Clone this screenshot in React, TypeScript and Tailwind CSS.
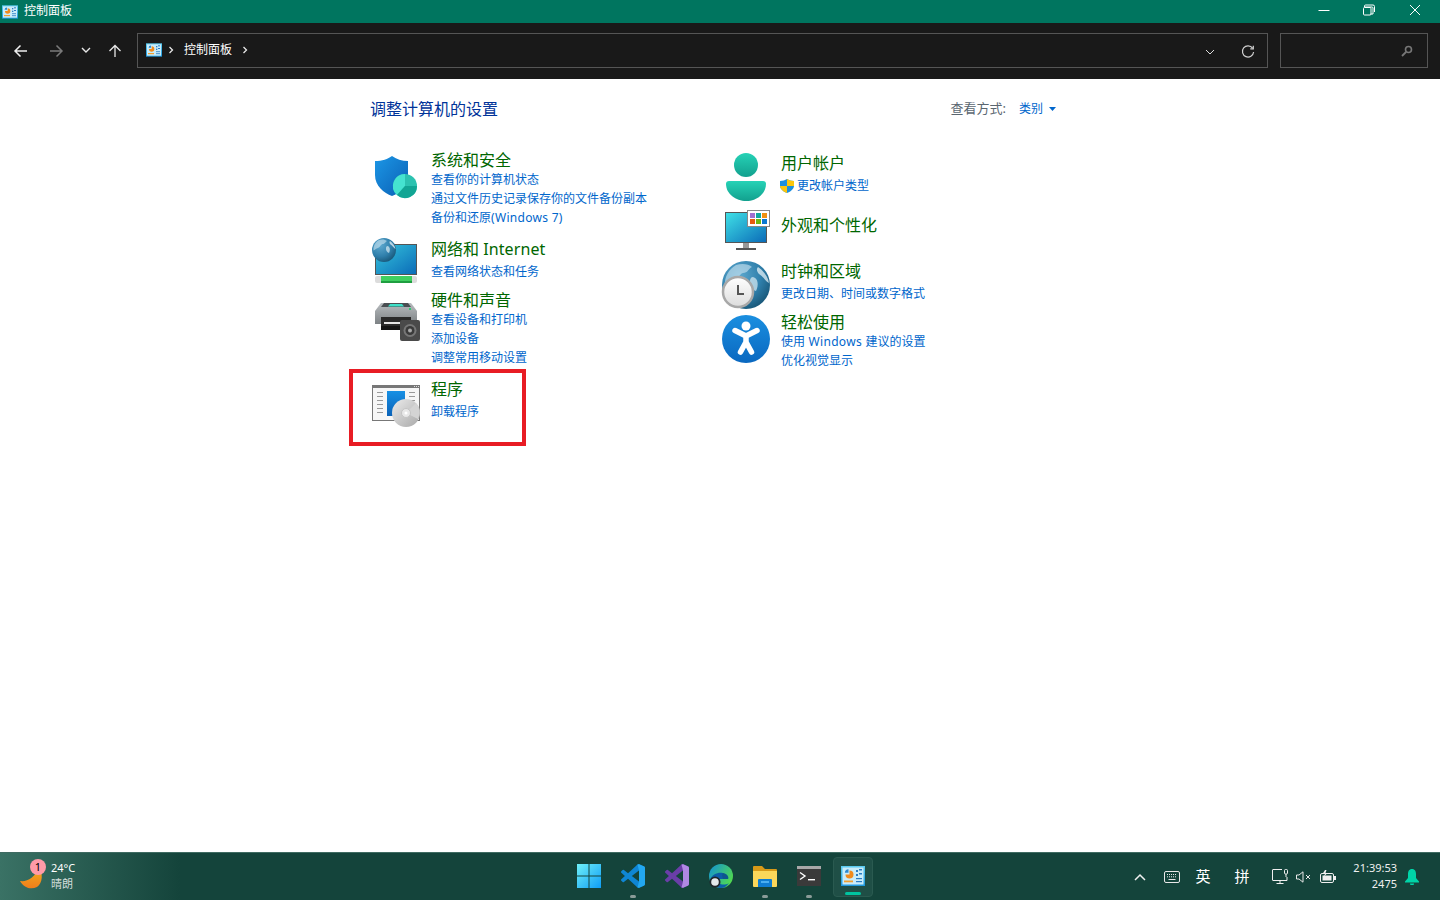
import React from "react";

function CpIcon({ size }: { size: number }) {
  return (
    <svg width={size} height={size} viewBox="0 0 24 24" className="block">
      <defs>
        <linearGradient id={`cpf${size}`} x1="0" y1="0" x2="0" y2="1">
          <stop offset="0" stopColor="#5ccdf2" />
          <stop offset="1" stopColor="#1f98dd" />
        </linearGradient>
      </defs>
      <rect x="0" y="2" width="24" height="20" fill={`url(#cpf${size})`} />
      <rect x="1.5" y="3.5" width="21" height="17" fill="#c9ecfa" />
      <path d="M8.5 6.5a4 4 0 1 1-4 4h4z" fill="#f08a1c" />
      <path d="M7.5 5.2a3.6 3.6 0 0 0-3.6 3.6h3.6z" fill="#2a88d0" />
      <rect x="3" y="16.5" width="9" height="1.8" fill="#f0a030" />
      <rect x="15" y="6" width="2" height="2" fill="#2a7cc4" />
      <rect x="18" y="5" width="3" height="1.5" fill="#2a7cc4" />
      <rect x="15" y="10" width="2" height="2" fill="#2a7cc4" />
      <rect x="18" y="9" width="3" height="1.5" fill="#2a7cc4" />
      <rect x="15" y="14" width="6" height="1.2" fill="#2a7cc4" />
      <rect x="15" y="17" width="6" height="1.2" fill="#2a7cc4" />
    </svg>
  );
}

function ShieldIcon() {
  return (
    <svg width="48" height="48" viewBox="0 0 48 48" className="block overflow-visible">
      <defs>
        <linearGradient id="sh" x1="0" y1="0" x2="1" y2="1">
          <stop offset="0" stopColor="#1c97e6" />
          <stop offset="1" stopColor="#0a5fb4" />
        </linearGradient>
      </defs>
      <path d="M20 3C24 6 30 8 36 8V22C36 33 28 40 20 43C12 40 3 33 3 22V8C10 8 16 6 20 3Z" fill="url(#sh)" />
      <circle cx="33" cy="33" r="12" fill="#2cc2b0" />
      <path d="M33 33L33 21A12 12 0 0 0 25 42Z" fill="#45e3d0" />
      <path d="M33 33L25 42A12 12 0 0 0 45 33Z" fill="#12a594" />
    </svg>
  );
}

function GlobeShape({ id, cx, cy, r }: { id: string; cx: number; cy: number; r: number }) {
  const k = r / 24;
  return (
    <g transform={`translate(${cx - r} ${cy - r}) scale(${k})`}>
      <defs>
        <radialGradient id={id} cx="0.35" cy="0.3" r="0.85">
          <stop offset="0" stopColor="#5ea9cf" />
          <stop offset="0.55" stopColor="#2f7fab" />
          <stop offset="1" stopColor="#114a68" />
        </radialGradient>
      </defs>
      <circle cx="24" cy="24" r="24" fill={`url(#${id})`} />
      <path d="M14 4C20 2 27 3 30 6C26 8 26 12 21 12C17 13 17 18 12 20C8 21 6 24 3 25C2 16 7 8 14 4Z" fill="#cfe6f1" fillOpacity="0.6" />
      <path d="M36 6C42 10 46 16 47 22C43 20 41 15 37 13C35 11 34 8 36 6Z" fill="#e6f2f7" fillOpacity="0.75" />
      <path d="M31 16C36 17 37 24 34 30C30 29 27 24 28 20C28 18 29 16 31 16Z" fill="#dcecf4" fillOpacity="0.7" />
    </g>
  );
}

function NetworkIcon() {
  return (
    <svg width="48" height="48" viewBox="0 0 48 48" className="block overflow-visible">
      <defs>
        <linearGradient id="nm" x1="0" y1="0" x2="1" y2="1">
          <stop offset="0" stopColor="#35c4dc" />
          <stop offset="1" stopColor="#0b6cb8" />
        </linearGradient>
      </defs>
      <rect x="3" y="6" width="42" height="31" fill="#555" />
      <rect x="4" y="7" width="40" height="29" fill="url(#nm)" />
      <rect x="3" y="38" width="42" height="7" rx="2" fill="#dcdcdc" />
      <rect x="9" y="38" width="31" height="7" fill="#3fcf60" />
      <rect x="9" y="43" width="31" height="2" fill="#1f9e40" />
      <GlobeShape id="ng" cx={12} cy={12} r={12} />
    </svg>
  );
}

function PrinterIcon() {
  return (
    <svg width="48" height="48" viewBox="0 0 48 48" className="block overflow-visible">
      <defs>
        <linearGradient id="pb" x1="0" y1="0" x2="0" y2="1">
          <stop offset="0" stopColor="#b8bcbf" />
          <stop offset="1" stopColor="#7d8285" />
        </linearGradient>
      </defs>
      <path d="M9 5H39L45 13V26H3V13Z" fill="url(#pb)" />
      <path d="M12 5H36L39 9H9Z" fill="#4a4e52" />
      <path d="M18 6H30L32 8.5H16Z" fill="#3fe0c8" />
      <rect x="37" y="10" width="2" height="2" fill="#2ecc71" />
      <rect x="9" y="19" width="30" height="9" fill="#2a2a2a" />
      <rect x="12" y="24" width="24" height="2" fill="#e4e4e4" />
      <rect x="9" y="28" width="24" height="4" fill="#151515" />
      <rect x="28" y="22" width="20" height="21" rx="2" fill="#4a4a4a" />
      <circle cx="38" cy="32.5" r="6.5" fill="#777" />
      <circle cx="38" cy="32.5" r="4.5" fill="#3a3a3a" />
      <circle cx="38" cy="32.5" r="2" fill="#aaa" />
    </svg>
  );
}

function ProgramsIcon() {
  return (
    <svg width="48" height="48" viewBox="0 0 48 48" className="block overflow-visible">
      <defs>
        <linearGradient id="pd" x1="0" y1="0" x2="1" y2="1">
          <stop offset="0" stopColor="#ececec" />
          <stop offset="1" stopColor="#a8a8a8" />
        </linearGradient>
        <linearGradient id="pbl" x1="0" y1="0" x2="0" y2="1">
          <stop offset="0" stopColor="#1790e4" />
          <stop offset="1" stopColor="#0a62b8" />
        </linearGradient>
      </defs>
      <rect x="0" y="3" width="48" height="36" fill="#777" />
      <rect x="1" y="6" width="46" height="32" fill="#f6f6f6" />
      <rect x="42" y="4" width="1" height="1" fill="#ddd" />
      <rect x="44" y="4" width="1" height="1" fill="#ddd" />
      <rect x="46" y="4" width="1" height="1" fill="#ddd" />
      {[10, 14, 18, 22, 26, 30].map((y) => (
        <rect key={y} x="5" y={y} width="6" height="1" fill="#999" />
      ))}
      {[10, 14, 18].map((y) => (
        <rect key={y} x="37" y={y} width="6" height="1" fill="#999" />
      ))}
      <rect x="15" y="9" width="18" height="25" fill="url(#pbl)" />
      <circle cx="34" cy="31" r="14" fill="url(#pd)" />
      <path d="M34 31L44 21A14 14 0 0 1 46 37Z" fill="#d4d4d4" />
      <circle cx="34" cy="31" r="4.5" fill="#e8e8e8" stroke="#c4c4c4" />
      <circle cx="34" cy="31" r="1.5" fill="#fff" />
    </svg>
  );
}

function UserIcon() {
  return (
    <svg width="48" height="48" viewBox="0 0 48 48" className="block overflow-visible">
      <defs>
        <linearGradient id="u1" x1="0" y1="0" x2="0" y2="1">
          <stop offset="0" stopColor="#26d2b6" />
          <stop offset="1" stopColor="#12a08e" />
        </linearGradient>
      </defs>
      <circle cx="24" cy="12" r="12" fill="url(#u1)" />
      <path d="M7 28H41C43 28 44 29 44 31C44 41 34 48 24 48C14 48 4 41 4 31C4 29 5 28 7 28Z" fill="url(#u1)" />
    </svg>
  );
}

function AppearanceIcon() {
  const cells = ["#a070d0", "#10a8a0", "#f09010", "#e85a10", "#70b810", "#0a78d0"];
  return (
    <svg width="48" height="48" viewBox="0 0 48 48" className="block overflow-visible">
      <defs>
        <linearGradient id="am" x1="0" y1="0" x2="1" y2="1">
          <stop offset="0" stopColor="#3fe0e6" />
          <stop offset="1" stopColor="#0b6cb8" />
        </linearGradient>
      </defs>
      <rect x="3" y="6" width="42" height="31" fill="#555" />
      <rect x="4" y="7" width="40" height="29" fill="url(#am)" />
      <rect x="21" y="37" width="6" height="5" fill="#999" />
      <rect x="14" y="42" width="20" height="2" fill="#555" />
      <rect x="25.5" y="4.5" width="22" height="16" fill="#fff" stroke="#888" />
      {cells.map((c, i) => (
        <rect key={c} x={28 + (i % 3) * 6} y={7 + Math.floor(i / 3) * 6} width="5" height="5" fill={c} />
      ))}
    </svg>
  );
}

function ClockIcon() {
  return (
    <svg width="48" height="48" viewBox="0 0 48 48" className="block overflow-visible">
      <defs>
        <linearGradient id="cf" x1="0" y1="0" x2="0" y2="1">
          <stop offset="0" stopColor="#fff" />
          <stop offset="1" stopColor="#dcdcdc" />
        </linearGradient>
      </defs>
      <GlobeShape id="cg" cx={24} cy={24} r={24} />
      <circle cx="16" cy="31" r="15" fill="url(#cf)" stroke="#a8a8a8" strokeWidth="2.5" />
      <path d="M16 24V33H22" fill="none" stroke="#555" strokeWidth="2" />
    </svg>
  );
}

function EaseIcon() {
  return (
    <svg width="48" height="48" viewBox="0 0 48 48" className="block overflow-visible">
      <defs>
        <linearGradient id="ea" x1="0" y1="0" x2="0" y2="1">
          <stop offset="0" stopColor="#1a8fe0" />
          <stop offset="1" stopColor="#0a68c0" />
        </linearGradient>
      </defs>
      <circle cx="24" cy="24" r="24" fill="url(#ea)" />
      <circle cx="24" cy="11" r="4.5" fill="#fff" />
      <path d="M13 15.5L24 21L35 15.5M24 21V27M24 27L18.5 37M24 27L29.5 37" fill="none" stroke="#fff" strokeWidth="5.5" strokeLinecap="round" strokeLinejoin="round" />
    </svg>
  );
}

function UacShield() {
  return (
    <svg width="14" height="14" viewBox="0 0 14 14" className="block shrink-0">
      <path d="M7 0C9 1 11 2 14 2V7C14 10 10 13 7 14C4 13 0 10 0 7V2C3 2 5 1 7 0Z" fill="#1a8fe0" />
      <path d="M7 0C9 1 11 2 14 2V7H7Z" fill="#fbc60e" />
      <path d="M7 7H0C0 10 4 13 7 14Z" fill="#fbc60e" />
    </svg>
  );
}

type ItemProps = {
  title: React.ReactNode;
  links: React.ReactNode[];
  icon: React.ReactNode;
  iconClass: string;
  className: string;
  titleGap?: string;
  children?: React.ReactNode;
};

function Item({ title, links, icon, iconClass, className, titleGap = "", children }: ItemProps) {
  return (
    <div className={`relative flex gap-[11px] ${className}`}>
      <div className="w-12 h-0 shrink-0">
        <div className={iconClass}>{icon}</div>
      </div>
      <div className="flex flex-col">
        <div className="text-[16px] leading-[20px] text-[#006600]">{title}</div>
        <div className={`flex flex-col ${titleGap}`}>
          {links.map((l, i) => (
            <div key={i} className="text-[12px] leading-[19px] text-[#0066cc] whitespace-pre flex items-center">
              {l}
            </div>
          ))}
        </div>
      </div>
      {children}
    </div>
  );
}

function Chevron({ className = "" }: { className?: string }) {
  return (
    <svg width="8" height="8" viewBox="0 0 8 8" className={className}>
      <path d="M2.5 1L5.5 4L2.5 7" fill="none" stroke="#e8e8e8" strokeWidth="1.3" />
    </svg>
  );
}

function VsShape({ fill }: { fill: string }) {
  return (
    <path
      d="M23.15 2.587L18.21.21a1.494 1.494 0 0 0-1.705.29l-9.46 8.63-4.12-3.128a.999.999 0 0 0-1.276.057L.327 7.261A1 1 0 0 0 .326 8.74L3.899 12 .326 15.26a1 1 0 0 0 .001 1.479L1.65 17.94a.999.999 0 0 0 1.276.057l4.12-3.128 9.46 8.63a1.492 1.492 0 0 0 1.704.29l4.942-2.377A1.5 1.5 0 0 0 24 20.06V3.939a1.5 1.5 0 0 0-.85-1.352zm-5.146 14.861L10.826 12l7.178-5.448v10.896z"
      fill={fill}
    />
  );
}

function TaskButton({ children, dot = false }: { children: React.ReactNode; dot?: boolean }) {
  return (
    <div className="w-11 h-10 flex flex-col items-center relative pt-[7px]">
      {children}
      {dot && <div className="absolute bottom-[-1px] w-[6px] h-[3px] rounded-full bg-[#8a9c98]" />}
    </div>
  );
}

export default function App() {
  return (
    <div className="h-[900px] w-[1440px] overflow-hidden flex flex-col bg-white font-['Noto_Sans','Noto_Sans_CJK_SC',sans-serif]">
      {/* title bar */}
      <div className="h-[23px] bg-[#00755f] flex items-center text-white shrink-0">
        <div className="pl-[2px]">
          <CpIcon size={16} />
        </div>
        <span className="ml-[6px] mt-[-2px] text-[12px] leading-none">控制面板</span>
        <div className="ml-auto flex items-center">
          <svg width="46" height="23" viewBox="0 0 46 23">
            <path d="M18.5 10.5H29.5" stroke="#fff" />
          </svg>
          <svg width="46" height="23" viewBox="0 0 46 23">
            <g transform="translate(-1 0)">
              <path d="M19.5 7.5H27a1 1 0 0 1 1 1V14.5H25.5M19.5 7.5V6.5a1 1 0 0 1 1-1H28a1.5 1.5 0 0 1 1.5 1.5V12.5" fill="none" stroke="#fff" transform="translate(0 -0.5)" />
              <rect x="18.5" y="7.5" width="7.5" height="7.5" rx="1" fill="none" stroke="#fff" />
            </g>
          </svg>
          <svg width="46" height="23" viewBox="0 0 46 23" className="mr-[2px]">
            <path d="M18 5L28 15M28 5L18 15" stroke="#fff" fill="none" />
          </svg>
        </div>
      </div>

      {/* toolbar */}
      <div className="h-[56px] bg-[#191919] flex items-center shrink-0 pl-[12px] pr-[12px]">
        <div className="flex items-center w-[125px]">
          <svg width="18" height="18" viewBox="0 0 18 18" className="mr-[17px]">
            <path d="M15 9H3.5M8.5 3.5L3 9L8.5 14.5" fill="none" stroke="#f0f0f0" strokeWidth="1.5" />
          </svg>
          <svg width="18" height="18" viewBox="0 0 18 18" className="mr-[15px]">
            <path d="M3 9H14.5M9.5 3.5L15 9L9.5 14.5" fill="none" stroke="#7a7a7a" strokeWidth="1.5" />
          </svg>
          <svg width="12" height="12" viewBox="0 0 12 12" className="mr-[15px] mt-[-2px]">
            <path d="M2 4L6 8L10 4" fill="none" stroke="#e8e8e8" strokeWidth="1.4" />
          </svg>
          <svg width="16" height="16" viewBox="0 0 16 16">
            <path d="M8 14V2.5M2.5 8L8 2.5L13.5 8" fill="none" stroke="#e8e8e8" strokeWidth="1.3" />
          </svg>
        </div>
        <div className="w-[1131px] h-[35px] mt-[-1px] border border-[#555] flex items-center pl-[8px] pb-[1px] text-[12px] text-white">
          <CpIcon size={16} />
          <Chevron className="ml-[5px]" />
          <span className="ml-[9px]">控制面板</span>
          <Chevron className="ml-[9px]" />
          <div className="ml-auto flex items-center pr-[12px]">
            <svg width="10" height="10" viewBox="0 0 10 10" className="mr-[26px] mt-[4px]">
              <path d="M1 3L5 7L9 3" fill="none" stroke="#ddd" />
            </svg>
            <svg width="14" height="14" viewBox="0 0 14 14" className="mt-[3px]">
              <path d="M11.6 3.2A5.6 5.6 0 1 0 12.6 7" fill="none" stroke="#d0d0d0" strokeWidth="1.2" />
              <path d="M12.3 0.8V3.8H9.3" fill="none" stroke="#d0d0d0" strokeWidth="1.2" />
            </svg>
          </div>
        </div>
        <div className="ml-[12px] w-[148px] h-[35px] mt-[-1px] border border-[#555] flex items-center justify-end pr-[14px]">
          <svg width="12" height="12" viewBox="0 0 12 12">
            <circle cx="7.5" cy="4.5" r="3" fill="none" stroke="#777" strokeWidth="1.6" />
            <path d="M5 7L1 11" stroke="#777" strokeWidth="1.8" />
          </svg>
        </div>
      </div>

      {/* content */}
      <div className="flex-1 bg-white pl-[370px] pt-[20px]">
        <div className="w-[686px] flex items-center justify-between h-[20px]">
          <h1 className="text-[16px] leading-[20px] font-normal text-[#003399]">调整计算机的设置</h1>
          <div className="flex items-center">
            <span className="text-[13px] text-[#5a6670]">查看方式:</span>
            <span className="ml-[13px] text-[12px] text-[#0066cc]">类别</span>
            <svg width="7" height="4" viewBox="0 0 7 4" className="ml-[6px]">
              <path d="M0 0H7L3.5 4Z" fill="#0066cc" />
            </svg>
          </div>
        </div>
        <div className="flex mt-[31px]">
          <div className="w-[350px] pl-[2px] flex flex-col">
            <Item
              title="系统和安全"
              icon={<ShieldIcon />}
              iconClass="mt-[3px]"
              className=""
              links={[
                "查看你的计算机状态",
                "通过文件历史记录保存你的文件备份副本",
                <span key="b">
                  备份和还原<span className="tracking-[0.3px]">(Windows 7)</span>
                </span>,
              ]}
            />
            <Item
              title={
                <span>
                  网络和 <span className="tracking-[0.1px]">Internet</span>
                </span>
              }
              icon={<NetworkIcon />}
              iconClass="mt-[-1px]"
              className="mt-[12px]"
              titleGap="mt-[3px]"
              links={["查看网络状态和任务"]}
            />
            <Item
              title="硬件和声音"
              icon={<PrinterIcon />}
              iconClass="mt-[8px]"
              className="mt-[9px]"
              links={["查看设备和打印机", "添加设备", "调整常用移动设置"]}
            />
            <Item
              title="程序"
              icon={<ProgramsIcon />}
              iconClass="mt-[3px]"
              className="mt-[12px]"
              titleGap="mt-[3px]"
              links={["卸载程序"]}
            >
              <div className="absolute left-[-23px] top-[-10px] w-[177px] h-[77px] border-[4px] border-[#e81c24]" />
            </Item>
          </div>
          <div className="pl-[2px] flex flex-col mt-[3px]">
            <Item
              title="用户帐户"
              icon={<UserIcon />}
              iconClass=""
              className=""
              titleGap="mt-[3px]"
              links={[
                <span key="a" className="flex items-center gap-[3px] ml-[-1px]">
                  <UacShield />
                  更改帐户类型
                </span>,
              ]}
            />
            <Item
              title="外观和个性化"
              icon={<AppearanceIcon />}
              iconClass="mt-[-9px]"
              className="mt-[20px]"
              links={[]}
            />
            <Item
              title="时钟和区域"
              icon={<ClockIcon />}
              iconClass=""
              className="mt-[26px]"
              titleGap="mt-[3px]"
              links={["更改日期、时间或数字格式"]}
            />
            <Item
              title="轻松使用"
              icon={<EaseIcon />}
              iconClass="mt-[3px]"
              className="mt-[9px]"
              links={[
                <span key="c">
                  使用<span className="tracking-[0.33px]"> Windows </span>建议的设置
                </span>,
                "优化视觉显示",
              ]}
            />
          </div>
        </div>
      </div>

      {/* taskbar */}
      <div className="h-[48px] shrink-0 bg-[#14443b] border-t border-[#3f6b62] grid grid-cols-[1fr_auto_1fr] items-center text-white">
        <div className="h-full bg-gradient-to-r from-[#3a7265] to-[#14443b] w-[180px] flex items-center pl-[19px]">
          <div className="relative w-[24px] h-[32px] mr-[8px]">
            <svg width="24" height="32" viewBox="0 0 24 32">
              <defs>
                <linearGradient id="mo" x1="0" y1="0" x2="0" y2="1">
                  <stop offset="0" stopColor="#f0b020" />
                  <stop offset="1" stopColor="#f07d1a" />
                </linearGradient>
              </defs>
              <path d="M1 20C8 21 16 17 20 6C24 12 24 22 18 26C12 29 5 27 1 20Z" fill="url(#mo)" />
            </svg>
            <div className="absolute left-[11px] top-[-2px] w-[16px] h-[16px] rounded-full bg-[#ff9ba8] text-[11px] leading-[16px] text-center text-black">
              1
            </div>
          </div>
          <div className="flex flex-col mt-[-2px]">
            <span className="text-[11px] leading-[16px] text-white">24°C</span>
            <span className="text-[11px] leading-[16px] text-[#d4dedb]">晴朗</span>
          </div>
        </div>

        <div className="flex items-start h-full pt-[4px] pl-[2px]">
          <TaskButton>
            <svg width="24" height="24" viewBox="0 0 24 24">
              <defs>
                <linearGradient id="st" x1="0" y1="0" x2="1" y2="1">
                  <stop offset="0" stopColor="#6ff0f8" />
                  <stop offset="1" stopColor="#0f9df5" />
                </linearGradient>
              </defs>
              <path d="M0 0H11.5V11.5H0ZM12.5 0H24V11.5H12.5ZM0 12.5H11.5V24H0ZM12.5 12.5H24V24H12.5Z" fill="url(#st)" />
            </svg>
          </TaskButton>
          <TaskButton dot>
            <svg width="24" height="24" viewBox="0 0 24 24">
              <VsShape fill="#0f86d4" />
              <path d="M16.5.5L18.2.2L23.2 2.6A1.5 1.5 0 0 1 24 3.9V20.1A1.5 1.5 0 0 1 23.2 21.4L18.2 23.8L16.5 23.5L18 17.4V6.6Z" fill="#23a8f0" />
            </svg>
          </TaskButton>
          <TaskButton>
            <svg width="24" height="24" viewBox="0 0 24 24">
              <VsShape fill="#6a3ea8" />
              <path d="M16.5.5L18.2.2L23.2 2.6A1.5 1.5 0 0 1 24 3.9V20.1A1.5 1.5 0 0 1 23.2 21.4L18.2 23.8L16.5 23.5L18 17.4V6.6Z" fill="#b088e4" />
            </svg>
          </TaskButton>
          <TaskButton>
            <svg width="24" height="24" viewBox="0 0 24 24">
              <defs>
                <linearGradient id="ed" x1="0" y1="0" x2="1" y2="0.6">
                  <stop offset="0" stopColor="#1090d8" />
                  <stop offset="1" stopColor="#50d850" />
                </linearGradient>
              </defs>
              <circle cx="12" cy="12" r="12" fill="url(#ed)" />
              <path d="M1 16C3 10 9 8 14 9C19 10 20 14 19 15H11C9 15 8 17 10 19C12 21 17 21 20 19C18 22 15 24 12 24C6 24 2 20 1 16Z" fill="#0c5ca8" />
              <path d="M14 9C19 10 20 14 19 15H14C13 12 13 10 14 9Z" fill="#14443b" fillOpacity="0.25" />
              <circle cx="6" cy="18" r="5.5" fill="#20252a" />
              <circle cx="6" cy="18" r="3.8" fill="#e4e8ea" />
            </svg>
          </TaskButton>
          <TaskButton dot>
            <svg width="24" height="24" viewBox="0 0 24 24">
              <path d="M0 3a1 1 0 0 1 1-1H9L12 5H23a1 1 0 0 1 1 1V8H0Z" fill="#d89a18" />
              <path d="M0 7H24V22a1 1 0 0 1-1 1H1a1 1 0 0 1-1-1Z" fill="#fbd75a" />
              <path d="M5 16a1 1 0 0 1 1-1H18a1 1 0 0 1 1 1V23H5Z" fill="#0f7cd0" />
              <rect x="8" y="17" width="8" height="2" fill="#4aaef0" />
            </svg>
          </TaskButton>
          <TaskButton dot>
            <svg width="24" height="24" viewBox="0 0 24 24">
              <rect x="0" y="2" width="24" height="20" fill="#3a3a3a" />
              <rect x="0" y="2" width="24" height="3" fill="#a8a8a8" />
              <path d="M3 8.5L8 12L3 15.5" fill="none" stroke="#fff" strokeWidth="1.4" />
              <rect x="11" y="15" width="7" height="1.4" fill="#fff" />
            </svg>
          </TaskButton>
          <div className="w-[40px] h-[40px] mx-[2px] rounded-[4px] bg-[#1f4f46] border border-[#2a5a50] flex flex-col items-center relative pt-[6px]">
            <CpIcon size={24} />
            <div className="absolute bottom-[1px] w-[16px] h-[3px] rounded-full bg-[#00c4a0]" />
          </div>
        </div>

        <div className="flex items-center justify-end h-full pr-[13px]">
          <div className="w-[24px] flex justify-center">
            <svg width="12" height="8" viewBox="0 0 12 8">
              <path d="M1 7L6 2L11 7" fill="none" stroke="#f0f0f0" strokeWidth="1.5" />
            </svg>
          </div>
          <div className="w-[38px] pl-[2px] flex justify-center">
            <svg width="16" height="12" viewBox="0 0 16 12">
              <rect x="0.5" y="0.5" width="15" height="11" rx="1.5" fill="none" stroke="#e8e8e8" />
              <path d="M3 3.5H13M3 5.8H13" stroke="#e8e8e8" strokeDasharray="1 1" />
              <path d="M4.5 8.5H11.5" stroke="#e8e8e8" />
            </svg>
          </div>
          <div className="w-[26px] text-center text-[15px] leading-none">英</div>
          <div className="w-[52px] text-center text-[15px] leading-none">拼</div>
          <div className="w-[24px] flex justify-center">
            <svg width="16" height="17" viewBox="0 0 16 17">
              <path d="M10 1.5H1a.5.5 0 0 0-.5.5V12a.5.5 0 0 0 .5.5H15V9" fill="none" stroke="#f0f0f0" />
              <path d="M8 12.5V15.5M4.5 15.5H11.5" stroke="#f0f0f0" />
              <rect x="12.5" y="1.5" width="3" height="4.5" rx="1" fill="none" stroke="#f0f0f0" />
              <path d="M14 6V9" stroke="#f0f0f0" />
            </svg>
          </div>
          <div className="w-[23px] flex justify-center">
            <svg width="15" height="12" viewBox="0 0 15 12">
              <path d="M0.5 4H3L7 0.8V11.2L3 8H0.5Z" fill="none" stroke="#e8e8e8" />
              <path d="M10 4L14 8M14 4L10 8" stroke="#e8e8e8" />
            </svg>
          </div>
          <div className="w-[26px] flex justify-center">
            <svg width="16" height="14" viewBox="0 0 16 14">
              <rect x="0.5" y="3.5" width="13" height="9" rx="1.5" fill="none" stroke="#f0f0f0" />
              <rect x="2.5" y="5.5" width="9" height="5" fill="#f0f0f0" />
              <rect x="14" y="6" width="2" height="4" fill="#f0f0f0" />
              <path d="M5 0L2.5 4H5L3.5 7L7.5 3H5.5L6.5 0Z" fill="#f0f0f0" />
            </svg>
          </div>
          <div className="w-[56px] flex flex-col items-end text-[11px] leading-[16px] text-[#f0f0f0] mt-[-2px]">
            <span>21:39:53</span>
            <span>2475</span>
          </div>
          <div className="w-[30px] flex justify-center">
            <svg width="14" height="16" viewBox="0 0 14 16">
              <path d="M7 0C4 0 3 2.5 3 5V9L0 12.5V13.5H14V12.5L11 9V5C11 2.5 10 0 7 0Z" fill="#00d4a8" />
              <path d="M5 14.5H9V15A1 1 0 0 1 8 16H6A1 1 0 0 1 5 15Z" fill="#00d4a8" />
            </svg>
          </div>
        </div>
      </div>
    </div>
  );
}
